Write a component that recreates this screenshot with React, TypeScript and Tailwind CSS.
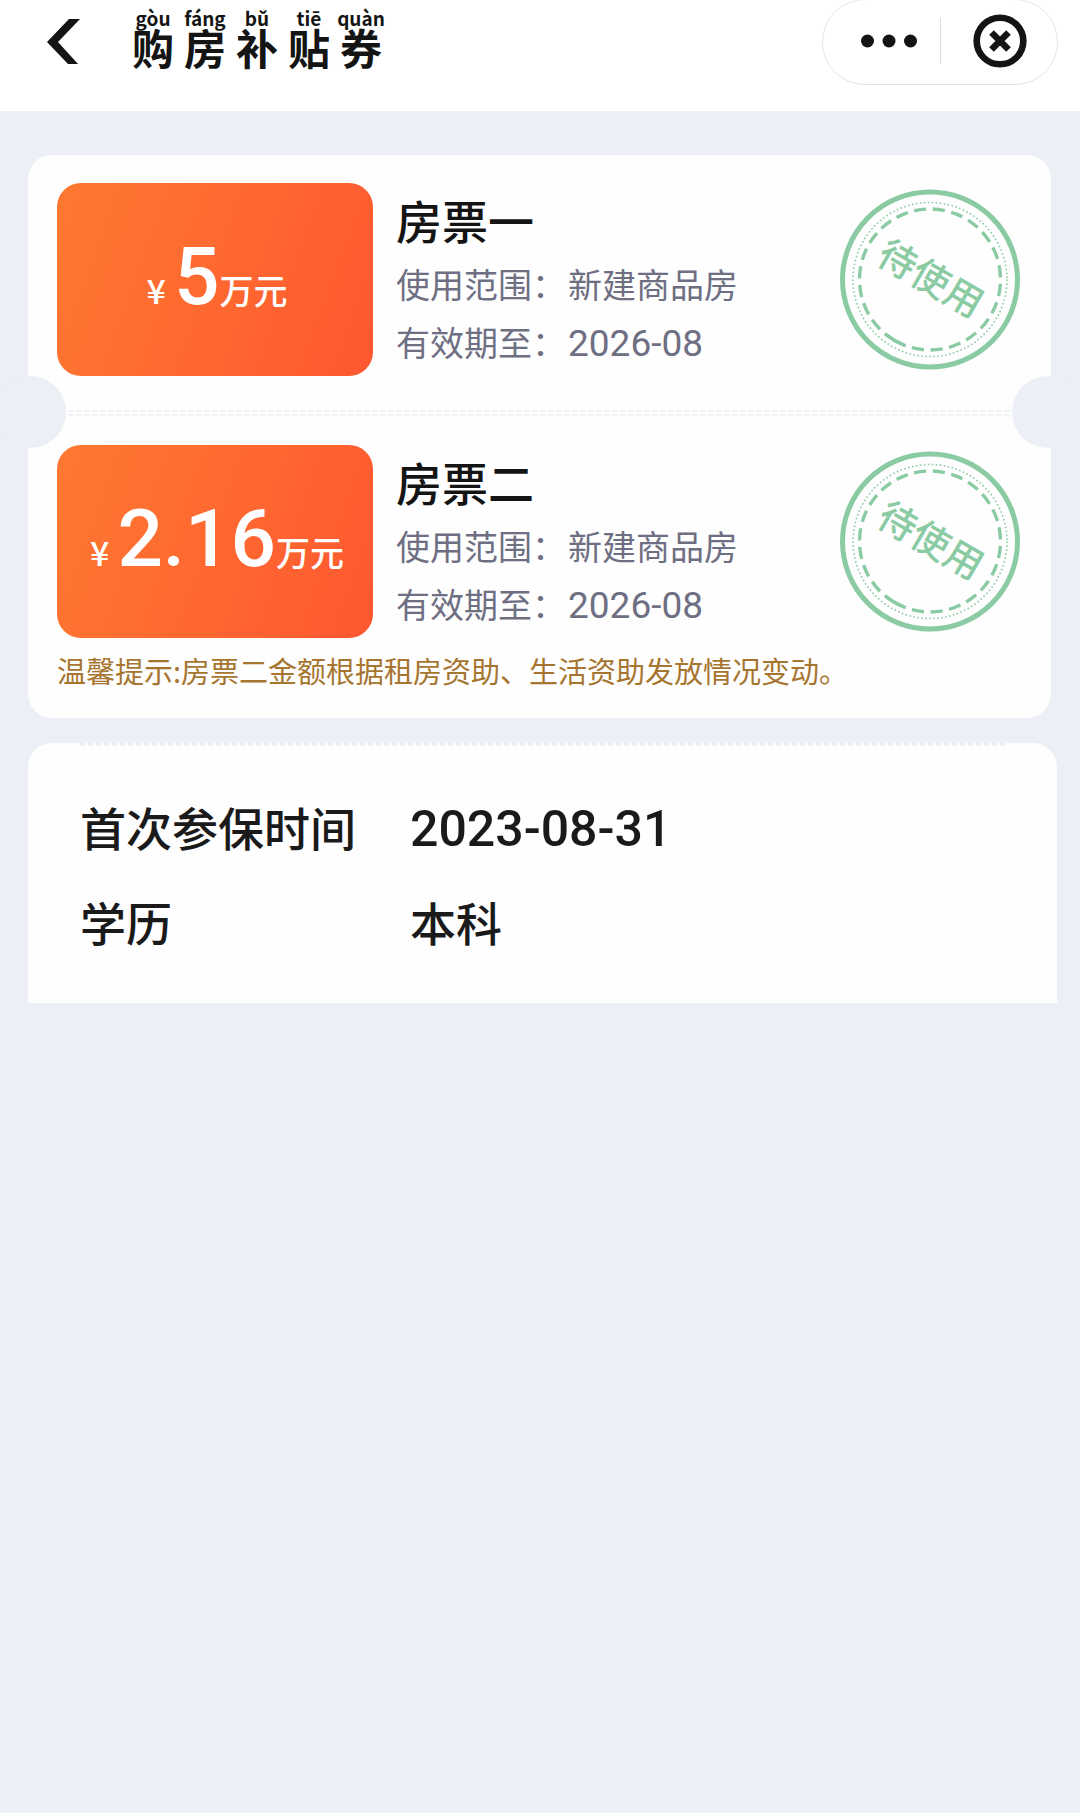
import React from 'react'

interface Voucher {
  name: string
  amount: string
  scope: string
  validUntil: string
  status: string
}

const TITLE = [
  { pinyin: 'gòu', char: '购' },
  { pinyin: 'fáng', char: '房' },
  { pinyin: 'bǔ', char: '补' },
  { pinyin: 'tiē', char: '贴' },
  { pinyin: 'quàn', char: '券' },
]

const VOUCHERS: Voucher[] = [
  { name: '房票一', amount: '5', scope: '新建商品房', validUntil: '2026-08', status: '待使用' },
  { name: '房票二', amount: '2.16', scope: '新建商品房', validUntil: '2026-08', status: '待使用' },
]

// one long dash at the lower left, the rest evenly spaced
const STAMP_DASHES = '22 6.5 ' + '12.2 6.5 '.repeat(22).trim()

const Stamp: React.FC<{ text: string }> = ({ text }) => (
  <svg viewBox="0 0 184 184" className="ml-auto size-[184px] shrink-0" fill="none" stroke="#8bcba4">
    <circle cx="92" cy="91.5" r="87.5" strokeWidth="5" />
    <circle cx="92" cy="91.5" r="77" strokeWidth="1.6" strokeDasharray="1.6 2.4" />
    <circle
      cx="92"
      cy="91.5"
      r="70.5"
      strokeWidth="3.4"
      strokeDasharray={STAMP_DASHES}
      transform="rotate(112 92 91.5)"
    />
    <text
      x="92"
      y="104"
      textAnchor="middle"
      transform="rotate(30 92 92)"
      fill="#8bcba4"
      stroke="none"
      className="text-[38px] font-medium"
    >
      {text}
    </text>
  </svg>
)

const Header = () => (
  <header className="flex h-[111px] items-start justify-between bg-white pl-10 pr-[22px]">
    <div className="flex items-start">
      <button type="button" aria-label="返回" className="mt-4 flex h-[50px] w-12 cursor-pointer">
        <svg viewBox="0 0 48 50" className="h-[50px] w-12" fill="#141414">
          <path d="M29 3H40L18 26L38 48H28L7 26Z" />
        </svg>
      </button>
      <h1 className="ml-11 flex gap-[10px] pt-2 text-[#141414]">
        {TITLE.map(({ pinyin, char }) => (
          <span key={char} className="flex w-[42px] flex-col items-center">
            <span className="text-[19px] leading-5 font-bold">{pinyin}</span>
            <span className="text-[42px] leading-[38px] font-bold">{char}</span>
          </span>
        ))}
      </h1>
    </div>
    <div className="-mt-px grid h-[86px] w-[236px] grid-cols-[1fr_1px_1fr] items-center rounded-full border border-[#e4e4e4] pb-[2px]">
      <button type="button" aria-label="更多" className="flex h-full cursor-pointer items-center justify-center pl-4">
        <svg viewBox="0 0 60 16" className="h-4 w-[60px]" fill="#141414">
          <circle cx="8.5" cy="8" r="6.5" />
          <circle cx="30" cy="8" r="6.5" />
          <circle cx="51.5" cy="8" r="6.5" />
        </svg>
      </button>
      <span className="h-[46px] bg-[#dedede]" />
      <button type="button" aria-label="关闭" className="flex h-full cursor-pointer items-center justify-center pl-[2px]">
        <svg viewBox="0 0 54 54" className="size-[54px]" fill="none" stroke="#141414">
          <circle cx="27" cy="27" r="23.3" strokeWidth="6.6" />
          <path d="M18.5 18.5L35.5 35.5M35.5 18.5L18.5 35.5" strokeWidth="6.6" />
        </svg>
      </button>
    </div>
  </header>
)

const VoucherRow: React.FC<{ voucher: Voucher }> = ({ voucher }) => (
  <article className="flex items-center px-[29px]">
    <div className="flex h-[193px] w-[316px] shrink-0 items-baseline justify-center rounded-3xl bg-linear-110 from-[#fe7830] to-[#fe5730] pt-9 pl-1 text-white">
      <span className="mr-2 text-[34px] font-medium">¥</span>
      <span className="font-[Roboto,sans-serif] text-[80px] leading-[116px] font-medium">{voucher.amount}</span>
      <span className="text-[34px] font-medium">万元</span>
    </div>
    <div className="ml-[23px] pt-[2px]">
      <h2 className="mb-[6px] text-[46px] leading-[60px] font-medium text-[#141414]">{voucher.name}</h2>
      <dl className="grid grid-cols-[auto_1fr] gap-x-[2px] leading-[58px] text-[#6f6f83]">
        <dt className="text-[34px]">使用范围：</dt>
        <dd className="text-[34px]">{voucher.scope}</dd>
        <dt className="text-[34px]">有效期至：</dt>
        <dd className="pt-[2px] font-[Roboto,sans-serif] text-[37px]">{voucher.validUntil}</dd>
      </dl>
    </div>
    <Stamp text={voucher.status} />
  </article>
)

const Perforation = () => (
  <div className="relative flex h-[69px] items-center px-10">
    <span className="absolute top-0 -left-[34px] size-[72px] rounded-full bg-[#eceff6]" />
    <span className="absolute top-0 -right-[33px] size-[72px] rounded-full bg-[#eceff6]" />
    <div className="mt-1 flex flex-1 flex-col gap-[2px]">
      <span className="h-[2px] bg-[repeating-linear-gradient(90deg,#f0f2f3_0_6px,transparent_6px_8px)]" />
      <span className="h-[2px] bg-[repeating-linear-gradient(90deg,#f0f2f3_0_6px,transparent_6px_8px)]" />
    </div>
  </div>
)

export default function App() {
  return (
    <div className="min-h-screen bg-[#eceff6] font-['Noto_Sans_CJK_SC',sans-serif]">
      <Header />
      <main className="pt-11">
        <section className="mr-[29px] ml-7 rounded-3xl bg-[#fefefe] pt-7 pb-[27px]">
          <VoucherRow voucher={VOUCHERS[0]} />
          <Perforation />
          <VoucherRow voucher={VOUCHERS[1]} />
          <p className="mt-[11px] px-[29px] text-[29px] leading-[42px] text-[#a6752f]">
            温馨提示:房票二金额根据租房资助、生活资助发放情况变动。
          </p>
        </section>

        <section className="mt-[25px] mr-[23px] ml-7 rounded-t-3xl bg-[#fefefe] pb-9">
          <div className="mx-[52px] h-[3px] bg-[repeating-linear-gradient(90deg,#eceff2_0_5px,transparent_5px_8px)]" />
          <dl className="grid grid-cols-[330px_1fr] items-baseline px-[52px] pt-[34px] text-[46px] leading-[92px] font-medium text-[#1a1a1a]">
            <dt>首次参保时间</dt>
            <dd className="font-[Roboto,sans-serif] text-[50px]">2023-08-31</dd>
            <dt>学历</dt>
            <dd>本科</dd>
          </dl>
        </section>
      </main>
    </div>
  )
}
